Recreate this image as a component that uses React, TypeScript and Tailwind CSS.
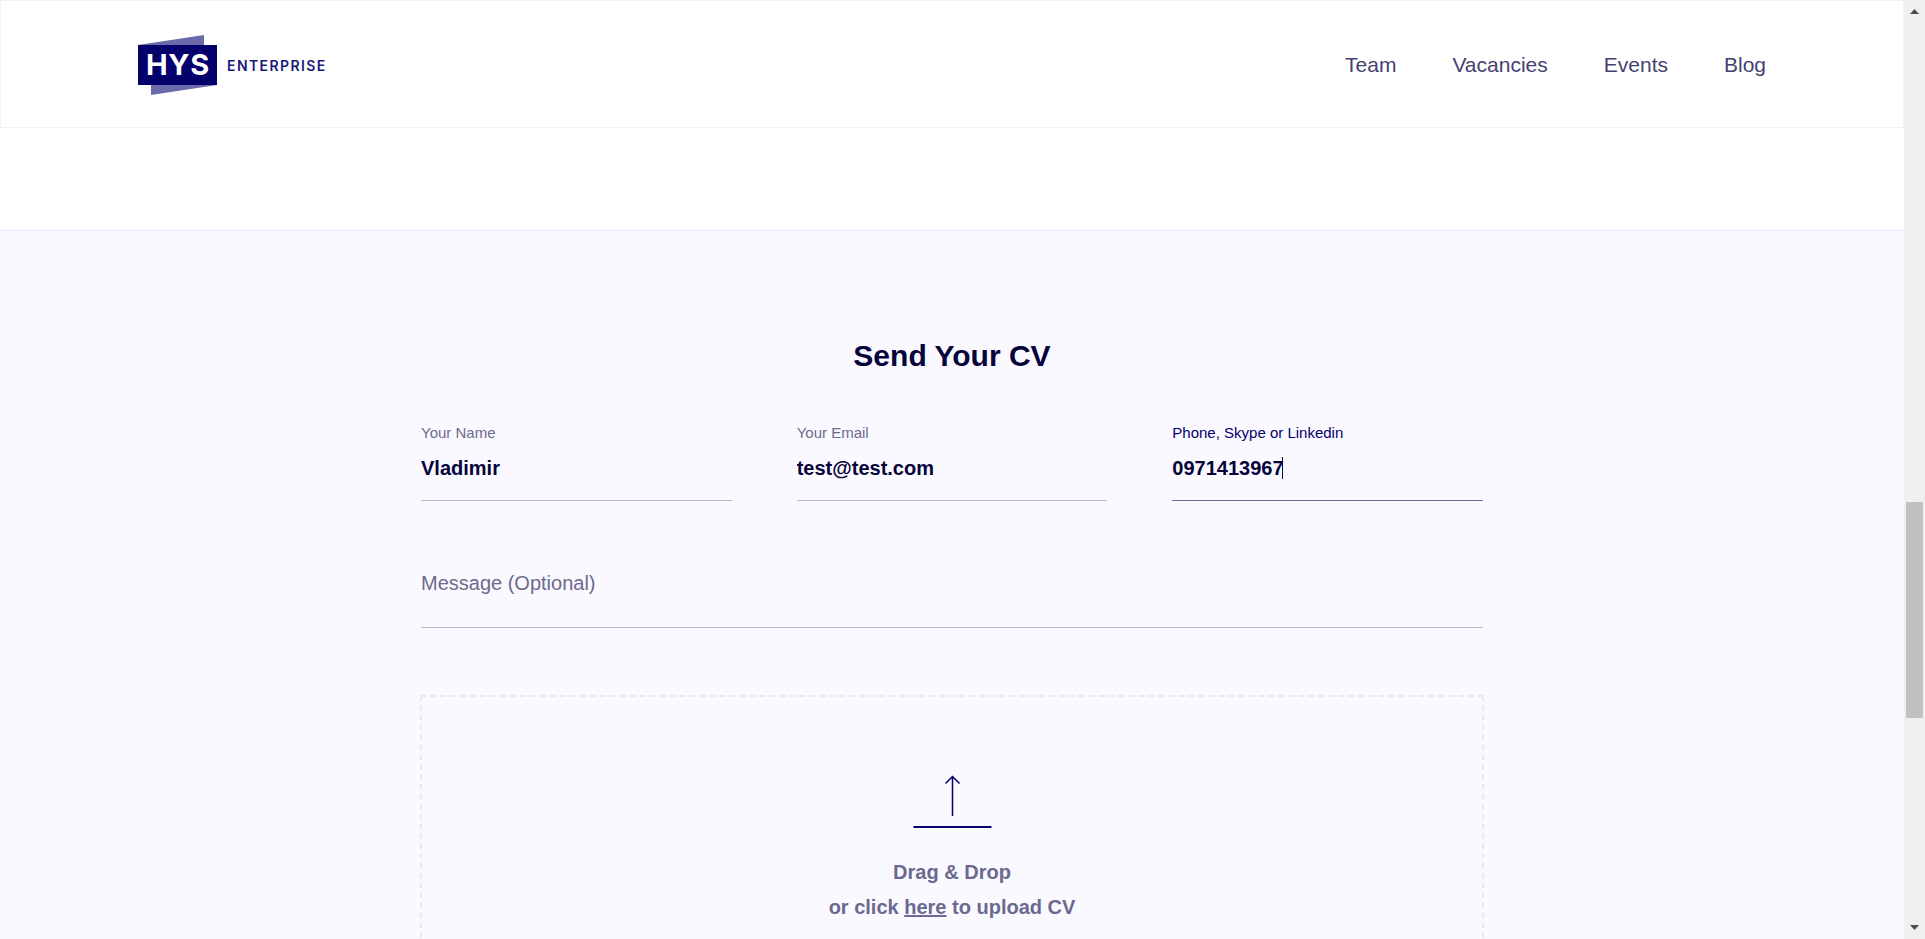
import { useState } from "react";

const links = ["Team", "Vacancies", "Events", "Blog"];

function Logo() {
  return (
    <a href="#home" aria-label="HYS Enterprise" className="block">
      <svg width="192" height="62" viewBox="0 0 192 62" aria-hidden="true">
        <path d="M0 11 66 1V11ZM13 51V61L79 51Z" fill="#6a69aa" />
        <path d="M0 11H79V51H0Z" fill="#04006c" />
        <text
          x="40"
          y="41"
          textAnchor="middle"
          className="fill-white font-['Inter',sans-serif] text-[29px] font-bold tracking-wide"
        >
          HYS
        </text>
        <text
          x="89"
          y="37"
          className="fill-[#1b1879] font-['Inter',sans-serif] text-[14px] font-semibold tracking-widest"
        >
          ENTERPRISE
        </text>
      </svg>
    </a>
  );
}

function Header() {
  return (
    <header className="flex h-32 shrink-0 items-center justify-between border border-[#f3f3f5] bg-white px-[137px] pt-0.5">
      <Logo />
      <nav className="flex gap-14 text-[21px] leading-7 text-[#444270]">
        {links.map((name) => (
          <a key={name} href={`#${name.toLowerCase()}`}>
            {name}
          </a>
        ))}
      </nav>
    </header>
  );
}

type FieldProps = {
  id: string;
  label: string;
  type: string;
  initial: string;
  active?: boolean;
};

function Field({ id, label, type, initial, active = false }: FieldProps) {
  const [value, setValue] = useState(initial);
  return (
    <div className="relative flex min-w-0 flex-col">
      <label
        htmlFor={id}
        className={`text-[15px] leading-5 ${active ? "text-[#04006c]" : "text-[#6c6b8c]"}`}
      >
        {label}
      </label>
      <input
        id={id}
        type={type}
        value={value}
        onChange={(e) => setValue(e.target.value)}
        className={`h-[58px] w-full border-b bg-transparent pt-[13px] pb-5 text-xl leading-6 font-bold text-[#06043a] outline-none ${
          active ? "border-[#6b6a93]" : "border-[#b9b8cb]"
        }`}
      />
      {active && (
        <span
          aria-hidden="true"
          className="absolute top-[34px] left-[110px] h-[22px] w-px bg-[#06043a]"
        />
      )}
    </div>
  );
}

function UploadIcon() {
  return (
    <svg width="80" height="54" viewBox="0 0 80 54" fill="none" stroke="#04006c" aria-hidden="true">
      <path d="M40.5 1.5V41M33.5 8.5 40.5 1.5 47.5 8.5" strokeWidth="1.5" />
      <path d="M1.5 52H79.5" strokeWidth="2.2" />
    </svg>
  );
}

function CvForm() {
  return (
    <section className="grow border-t border-[#e8e6fa] bg-[#faf9ff] px-6 pt-[107px] pb-24">
      <form className="mx-auto max-w-[1062px]">
        <h2 className="text-center text-3xl leading-9 font-bold text-[#06043a]">Send Your CV</h2>
        <div className="mt-[49px] grid grid-cols-3 gap-[65px]">
          <Field id="name" label="Your Name" type="text" initial="Vladimir" />
          <Field id="email" label="Your Email" type="email" initial="test@test.com" />
          <Field
            id="contact"
            label="Phone, Skype or Linkedin"
            type="text"
            initial="0971413967"
            active
          />
        </div>
        <textarea
          id="message"
          aria-label="Message (Optional)"
          placeholder="Message (Optional)"
          rows={1}
          className="mt-[70px] block w-full resize-none border-b border-[#b9b8cb] bg-transparent pb-8 text-xl leading-6 outline-none placeholder:text-[#6c6b8c]"
        />
        <label
          htmlFor="cv"
          className="-mx-px mt-[67px] flex cursor-pointer flex-col items-center border-2 border-dashed border-[#e9e8f8] pt-[78px] pb-20 text-center"
        >
          <UploadIcon />
          <span className="mt-[26px] text-xl leading-[35px] font-bold text-[#6a698f]">
            Drag &amp; Drop
            <br />
            or click <span className="underline">here</span> to upload CV
          </span>
          <input id="cv" type="file" className="hidden" />
        </label>
      </form>
    </section>
  );
}

function ScrollRail() {
  return (
    <div aria-hidden="true" className="flex w-[21px] shrink-0 flex-col items-center bg-[#f0f0f0]">
      <svg width="21" height="21" viewBox="0 0 21 21" fill="#4d4d4d">
        <path d="M6 14 10.5 9 15 14Z" />
      </svg>
      <div className="grow-[481]" />
      <div className="w-[17px] grow-[216] bg-[#c1c1c1]" />
      <div className="grow-[200]" />
      <svg width="21" height="21" viewBox="0 0 21 21" fill="#4d4d4d">
        <path d="M6 7H15L10.5 12Z" />
      </svg>
    </div>
  );
}

export default function App() {
  return (
    <div className="flex h-screen overflow-hidden bg-white font-['Liberation_Sans',Arial,sans-serif]">
      <main className="flex min-w-0 grow flex-col overflow-hidden">
        <Header />
        <div className="h-[102px] shrink-0" />
        <CvForm />
      </main>
      <ScrollRail />
    </div>
  );
}
